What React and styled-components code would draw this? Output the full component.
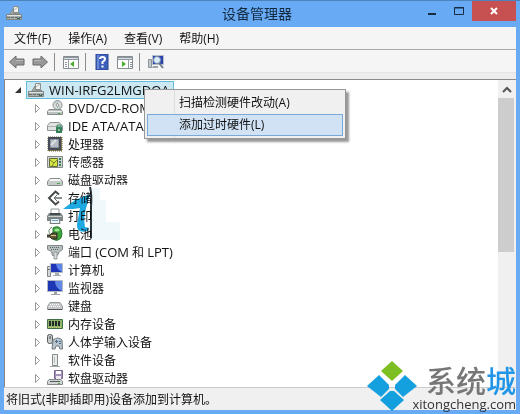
import React from 'react'
import styled, { createGlobalStyle } from 'styled-components'

const GlobalStyle = createGlobalStyle`
  * {
    box-sizing: border-box;
  }
  html, body, #root {
    height: 100%;
    margin: 0;
  }
  body {
    overflow: hidden;
    color: #111;
    font-family: "Open Sans", "Noto Sans CJK SC", sans-serif;
    font-size: 12px;
  }
  button {
    border: none;
    padding: 0;
    background: none;
    color: inherit;
    font: inherit;
  }
`

const ServerIcon = () => (
  <Icon viewBox="0 0 16 16">
    <path d="M7.500 1.500h5v6h-5z" fill="#eef1f0" stroke="#8a918f" />
    <path d="M8 5l4-3" stroke="#b3bab7" />
    <path d="M4 9l3-5v4h6l1 1z" fill="#c5cac8" stroke="#7d8482" />
    <path d="M0.500 9.500h15v5H0.500z" fill="#a9afad" stroke="#7d8482" />
    <path d="M1 10.500h14" stroke="#dfe4e2" />
    <path d="M1 12.500h14" stroke="#666d6b" strokeDasharray="3 1" />
    <path d="M11 13.500h3" stroke="#3b6a58" />
  </Icon>
)

const DiscIcon = () => (
  <Icon viewBox="0 0 16 16">
    <circle cx="10.500" cy="5" r="4.500" fill="#d9dddd" stroke="#8c9292" />
    <path d="M8 2l5 6M10.500 1v7" stroke="#a7bfaf" />
    <circle cx="10.500" cy="5" r="1.300" fill="#fff" stroke="#999" />
    <path d="M2 9.500h12l1.500 2v3H0.500v-3z" fill="#bcc1c1" stroke="#858b8b" />
    <path d="M1 11.500h14" stroke="#eee" />
    <path d="M11 13.500h2" stroke="#44a33e" />
  </Icon>
)

const IdeIcon = () => (
  <Icon viewBox="0 0 16 16">
    <path d="M3 4.500h9l3.500 3v5H0.500v-5z" fill="#e1e3e3" stroke="#8d9393" />
    <path d="M1 8.500h9" stroke="#aaafaf" />
    <path d="M9 9h6v6H9z" fill="#32805a" />
    <path d="M10 7h4v2h-4z" fill="#b8d3c5" stroke="#4b8a6b" />
    <path d="M11 11h2v2h-2z" fill="#8fc3a4" />
  </Icon>
)

const ChipIcon = () => (
  <Icon viewBox="0 0 16 16">
    <path d="M1 1h14v14H1z" fill="#857b50" stroke="#6a6030" strokeDasharray="1 1" />
    <path d="M1 1h13v13H1z" fill="#454c57" />
    <path d="M3.500 3.500h8v8h-8z" fill="#b6bcc4" stroke="#8c939e" />
    <path d="M4 9l5-5" stroke="#dde1e6" strokeWidth="2" />
  </Icon>
)

const SensorIcon = () => (
  <Icon viewBox="0 0 16 16">
    <path d="M0.500 2.500h15v11H0.500z" fill="#d2d7d3" stroke="#828883" />
    <path d="M2.500 4.500h8v8h-8z" fill="#d8e643" stroke="#606b3b" />
    <path d="M3 6l4 3 4-4M7 9l-2 3" stroke="#748434" fill="none" />
    <path d="M13 4v2M13 7v2M13 10v2" stroke="#36765a" strokeWidth="2" />
  </Icon>
)

const DiskIcon = () => (
  <Icon viewBox="0 0 16 16">
    <path d="M3 6.500h10l2.500 3v3q0 1-1 1h-13q-1 0-1-1v-3z" fill="#c7caca" stroke="#868b8b" />
    <path d="M3 7h10l1 2H2z" fill="#f5f6f6" />
    <path d="M10 11.500h3" stroke="#42a840" />
  </Icon>
)

const StorageIcon = () => (
  <Icon viewBox="0 0 16 16">
    <path d="M12 4.500L8.500 1.500 2 8l6.500 6.500L12 11.500" fill="none" stroke="#44494a" strokeWidth="2" />
    <path d="M10 5L7 8l3 3" fill="none" stroke="#6c7171" />
    <path d="M8 8h7" stroke="#8c9191" strokeWidth="2" />
  </Icon>
)

const PrinterIcon = () => (
  <Icon viewBox="0 0 16 16">
    <path d="M4 1h8v6H4z" fill="#fff" stroke="#929999" />
    <path d="M2 5h12l2 3v5H0V8z" fill="#7e8587" />
    <path d="M1 8.500h14" stroke="#c9cece" />
    <path d="M3 6h10" stroke="#444b4c" strokeWidth="2" />
    <path d="M4 10.500h8l1 5H3z" fill="#eff5f8" stroke="#747b7e" />
    <path d="M5 12.500h6" stroke="#66a7c8" />
  </Icon>
)

const BatteryIcon = () => (
  <Icon viewBox="0 0 16 16">
    <path d="M6 2q5-3 8 1 2 5 0 9-4 4-8 1z" fill="#3aa63c" stroke="#287b2b" />
    <path d="M7 4q3-3 6 0-3 3-6 0" fill="#a8e29a" />
    <path d="M5 1Q0 4 3 8" fill="none" stroke="#738372" />
    <path d="M0 9h3l2-2h5v6H5l-2-2H0" fill="#5e5738" stroke="#302f25" />
    <path d="M4 9.500h5" stroke="#d5c684" />
  </Icon>
)

const PortIcon = () => (
  <Icon viewBox="0 0 16 16">
    <path d="M0.500 1.500h15v4l-3 2-2 4h-5l-1-4-4-2z" fill="#b9bebe" stroke="#818888" />
    <path d="M3 3.500h10M4 5.500h8" stroke="#5d6464" strokeDasharray="1 1" />
    <path d="M7 8h3v7H7z" fill="#d9dddd" stroke="#969d9d" />
  </Icon>
)

const ComputerIcon = () => (
  <Icon viewBox="0 0 16 16">
    <path d="M0.500 4.500h3v10h-3z" fill="#d2d6d7" stroke="#818789" />
    <path d="M1 7.500h2" stroke="#677071" />
    <path d="M3.500 1.500h12v9h-12z" fill="#1f36b8" stroke="#b5bac4" />
    <path d="M9 2h6v8q-5-2-6-8" fill="#5d86ea" />
    <path d="M8 11h4v2h2v1H6v-1h2z" fill="#a7aeb0" />
  </Icon>
)

const MonitorIcon = () => (
  <Icon viewBox="0 0 16 16">
    <path d="M0.500 0.500h15v11h-15z" fill="#1f36b4" stroke="#b3bac6" />
    <path d="M8 1h7v10Q8 8 8 1" fill="#6288e5" />
    <path d="M7 12h3v2h3v1H4v-1h3z" fill="#9ba2a5" />
  </Icon>
)

const KeyboardIcon = () => (
  <Icon viewBox="0 0 16 16">
    <path d="M3 4.500h10l2.500 4v3H0.500v-3z" fill="#c5c8c9" stroke="#959b9d" />
    <path d="M3 6.500h10M2 8.500h12" stroke="#fff" strokeDasharray="1 1" />
    <path d="M1 11.500h14" stroke="#545a5c" />
  </Icon>
)

const MemoryIcon = () => (
  <Icon viewBox="0 0 16 16">
    <path d="M0.500 3.500h15v9H0.500z" fill="#8fb46c" stroke="#3f7048" />
    <path d="M3 5v5M6 5v5M9 5v5M12 5v5" stroke="#252b28" strokeWidth="2" />
    <path d="M1 11.500h14" stroke="#d8c974" strokeDasharray="1 1" />
  </Icon>
)

const HidIcon = () => (
  <Icon viewBox="0 0 16 16">
    <rect x="0.500" y="0.500" width="5" height="9" rx="2" fill="#c5caca" stroke="#545b5e" />
    <path d="M3 2v3" stroke="#444b4e" />
    <path d="M6 6q5-4 9 0l0.500 9H13l-1-3H9l-1 3H5z" fill="#bbc4ca" stroke="#707b83" />
    <path d="M8 7.500h3M9.500 6v3M12 7.500h2M12 9.500h2" stroke="#416f94" />
  </Icon>
)

const SoftwareIcon = () => (
  <Icon viewBox="0 0 16 16">
    <path d="M5.500 2.500h5v11h-5z" fill="#e9eaea" stroke="#858b8b" />
    <path d="M7.500 5v6" stroke="#b6bbbb" />
    <path d="M3 14.500h10" stroke="#9da2a2" />
  </Icon>
)

const FloppyIcon = () => (
  <Icon viewBox="0 0 16 16">
    <path d="M7.500 0.500h8v8h-8z" fill="#a592bb" stroke="#78678b" />
    <path d="M9 1h5v3H9z" fill="#fff" />
    <path d="M9 6h5v3H9z" fill="#eeeaf1" />
    <path d="M2 9.500h12l1.500 2v3H0.500v-3z" fill="#d1d5d5" stroke="#838989" />
    <path d="M3 11.500h10" stroke="#555c5c" />
    <path d="M11 13.500h2" stroke="#49a047" />
  </Icon>
)

const ArrowIcon = ({ back }) => (
  <Icon viewBox="0 0 16 16">
    <path
      d={back ? 'M0.500 8L7 2v3h8v6H7v3z' : 'M15.500 8L9 2v3H1v6h8v3z'}
      fill="#999"
      stroke="#686868"
    />
    <path d={back ? 'M7 6.500h7' : 'M2 6.500h7'} stroke="#bbb" />
  </Icon>
)

const PanelIcon = ({ right }) => (
  <Icon viewBox="0 0 16 16">
    <path d="M0.500 2.500h15v12H0.500z" fill="#fff" stroke="#858c91" />
    <path d="M1 3.500h14M1 5.500h14" stroke="#8d979e" />
    <path d="M1 4.500h14" stroke="#d9dfe3" />
    {right ? (
      <>
        <path d="M11.500 6v8" stroke="#959ca0" />
        <path d="M13 8.500h2M13 10.500h2M13 12.500h2" stroke="#8c9499" />
        <path d="M5 7l4 3-4 3z" fill="#4aad28" />
      </>
    ) : (
      <>
        <path d="M5.500 6v8" stroke="#959ca0" />
        <path d="M2 8.500h2M2 10.500h2M2 12.500h2" stroke="#8c9499" />
        <path d="M11 7l-4 3 4 3z" fill="#4aad28" />
      </>
    )}
  </Icon>
)

const HelpIcon = () => (
  <Icon viewBox="0 0 16 16">
    <path d="M2 0h12v16H2z" fill="#3d60bd" stroke="#2b458f" />
    <path d="M3 1h2v14H3z" fill="#6888d3" />
    <path d="M6 5q0-2 2.500-2T11 5q0 1.500-2.500 3v2M8.500 11.500v2" fill="none" stroke="#fff" strokeWidth="2" />
  </Icon>
)

const ScanIcon = () => (
  <Icon viewBox="0 0 16 16">
    <path d="M0.500 5.500h3v8h-3z" fill="#c3c9cc" stroke="#8c9397" />
    <path d="M4.500 1.500h11v9h-11z" fill="#2b46b0" stroke="#b6bfca" />
    <circle cx="9" cy="6" r="3.500" fill="#d9edfa" stroke="#7f8ca7" />
    <path d="M11 9l4 5" stroke="#737d84" strokeWidth="2" />
    <path d="M5 12h5v2H4z" fill="#9da4a7" />
  </Icon>
)

const Icon = styled.svg`
  width: 16px;
  height: 16px;
  flex: none;
`

// latin letters run a little larger than the chinese ones
const Latin = styled.span`
  font-size: 13px;
`

const devices = [
  { name: <Latin>DVD/CD-ROM</Latin>, icon: DiscIcon },
  { name: <Latin>IDE ATA/ATAPI</Latin>, icon: IdeIcon },
  { name: '处理器', icon: ChipIcon },
  { name: '传感器', icon: SensorIcon },
  { name: '磁盘驱动器', icon: DiskIcon },
  { name: '存储', icon: StorageIcon },
  { name: '打印', icon: PrinterIcon },
  { name: '电池', icon: BatteryIcon },
  { name: <>端口 <Latin>(COM</Latin> 和 <Latin>LPT)</Latin></>, icon: PortIcon },
  { name: '计算机', icon: ComputerIcon },
  { name: '监视器', icon: MonitorIcon },
  { name: '键盘', icon: KeyboardIcon },
  { name: '内存设备', icon: MemoryIcon },
  { name: '人体学输入设备', icon: HidIcon },
  { name: '软件设备', icon: SoftwareIcon },
  { name: '软盘驱动器', icon: FloppyIcon },
]

export default function App() {
  return (
    <>
      <GlobalStyle />
      <Window>
        <TitleBar>
          <ServerIcon />
          <h1>设备管理器</h1>
          <WindowButton aria-label="最小化">
            <svg width="12" height="12"><path d="M2 9h8" stroke="#152c43" strokeWidth="2" /></svg>
          </WindowButton>
          <WindowButton aria-label="最大化">
            <svg width="12" height="12"><path d="M1.500 2.500h9v7h-9zM1 3h10" stroke="#152c43" fill="none" /></svg>
          </WindowButton>
          <WindowButton $close aria-label="关闭">
            <svg width="12" height="12"><path d="M3 3l6 6M9 3L3 9" stroke="#fff" strokeWidth="2" /></svg>
          </WindowButton>
        </TitleBar>
        <MenuBar>
          <button>文件(F)</button>
          <button>操作(A)</button>
          <button>查看(V)</button>
          <button>帮助(H)</button>
        </MenuBar>
        <Toolbar>
          <ToolButton aria-label="后退"><ArrowIcon back /></ToolButton>
          <ToolButton aria-label="前进"><ArrowIcon /></ToolButton>
          <Divider />
          <ToolButton aria-label="控制台树"><PanelIcon /></ToolButton>
          <Divider />
          <ToolButton aria-label="帮助"><HelpIcon /></ToolButton>
          <ToolButton aria-label="操作窗格"><PanelIcon right /></ToolButton>
          <Divider />
          <ToolButton aria-label="扫描"><ScanIcon /></ToolButton>
        </Toolbar>
        <Content>
          <Tree>
            <Root>
              <svg width="8" height="8"><path d="M7 1v6H1z" fill="#333" /></svg>
              <Selected>
                <ServerIcon />
                <Latin>WIN-IRFG2LMGDOA</Latin>
              </Selected>
            </Root>
            {devices.map(({ name, icon: DeviceIcon }, index) => (
              <Row key={index}>
                <svg width="8" height="10"><path d="M1.500 1.500v8l4-4z" fill="#fff" stroke="#999" /></svg>
                <DeviceIcon />
                <span>{name}</span>
              </Row>
            ))}
          </Tree>
          <ScrollBar>
            <button aria-label="向上滚动">
              <svg width="10" height="8"><path d="M1 6l4-4 4 4" fill="none" stroke="#555" strokeWidth="2" /></svg>
            </button>
            <Thumb />
          </ScrollBar>
        </Content>
        <StatusBar>将旧式(非即插即用)设备添加到计算机。</StatusBar>
        <Smudge viewBox="0 0 68 64" aria-hidden="true">
          <path d="M30 1h38v56H30z" fill="#fff" />
          <path d="M30 4h8v12h6v22h14v18H30z" fill="#eff9fc" />
        </Smudge>
        <Smudge $ink viewBox="0 0 68 64" aria-hidden="true">
          <path d="M1 25l12-9 15-6-3 11q-4 12-2 22l4 1-1 3q-12 3-11-7l3-16-7 1z" fill="#1ea9e1" />
          <path d="M28 3q2 8 1 20v31" fill="none" stroke="#26343b" strokeWidth="2" />
        </Smudge>
        <ContextMenu>
          <MenuItem>扫描检测硬件改动(A)</MenuItem>
          <MenuItem $active>添加过时硬件(L)</MenuItem>
        </ContextMenu>
        <Watermark>
          <svg viewBox="0 0 52 52">
            <path d="M26 1l11 10-11 10-11-10z" fill="#7dbe22" />
            <path d="M13 15l10 10v4l-8 8L1 26z" fill="#149fdf" />
            <path d="M39 15l12 11-14 11-8-8v-4z" fill="#149fdf" />
            <path d="M24 31h4l10 9-12 11-12-11z" fill="#149fdf" />
          </svg>
          <div>
            <strong>系统<em>城</em></strong>
            <span>xitongcheng.com</span>
          </div>
        </Watermark>
      </Window>
    </>
  )
}

const Window = styled.main`
  position: relative;
  display: flex;
  flex-direction: column;
  height: 100vh;
  padding: 0 4px 4px;
  border-top: 1px solid #4d83bd;
  background: #69aaf5;
`

const TitleBar = styled.header`
  display: flex;
  align-items: flex-start;
  height: 26px;
  flex: none;
  ${Icon} {
    margin: 4px 0 0 2px;
  }
  h1 {
    flex: 1;
    margin: 0 0 0 74px;
    color: #12293f;
    font-size: 14px;
    font-weight: 400;
    line-height: 25px;
    text-align: center;
  }
`

const WindowButton = styled.button`
  display: grid;
  place-items: center;
  width: ${({ $close }) => ($close ? '44px' : '27px')};
  height: 20px;
  background: ${({ $close }) => ($close ? '#c75050' : 'none')};
`

const MenuBar = styled.nav`
  display: flex;
  gap: 17px;
  height: 23px;
  flex: none;
  padding: 0 10px;
  border-bottom: 1px solid #aaa;
  background: #f5f5f5;
`

const Toolbar = styled.div`
  display: flex;
  align-items: center;
  gap: 5px;
  height: 30px;
  flex: none;
  padding: 0 4px 6px;
  border-bottom: 1px solid #8b8b8b;
  background: linear-gradient(#f5f5f5 22px, #ddd 22px, #ededed 23px);
`

const ToolButton = styled.button`
  display: grid;
  place-items: center;
  width: 18px;
  height: 20px;
`

const Divider = styled.span`
  width: 1px;
  height: 18px;
  margin-right: 2px;
  background: #8c8c8c;
`

const Content = styled.section`
  display: flex;
  flex: 1;
  min-height: 0;
  border-left: 1px solid #858585;
  background: #fff;
`

const Tree = styled.div`
  flex: 1;
  min-width: 0;
  padding-top: 1px;
  overflow: hidden;
`

const Row = styled.div`
  display: flex;
  align-items: center;
  height: 18px;
  padding-left: 29px;
  white-space: nowrap;
  ${Icon} {
    margin: 0 5px 0 5px;
  }
`

const Root = styled(Row)`
  gap: 4px;
  padding-left: 9px;
`

const Selected = styled.div`
  display: flex;
  align-items: center;
  height: 18px;
  padding-right: 3px;
  border: 1px solid #65bcd9;
  background: #cce8f3;
  ${Icon} {
    margin: 0 5px 0 1px;
  }
`

const ScrollBar = styled.div`
  display: flex;
  flex-direction: column;
  width: 18px;
  background: #f0f0f0;
  button {
    height: 18px;
  }
`

const Thumb = styled.div`
  height: 154px;
  margin: 0 2px 0 0;
  background: #cdcdcd;
`

const StatusBar = styled.footer`
  height: 23px;
  flex: none;
  padding-left: 2px;
  border-top: 1px solid #ccc;
  background: #f0f0f0;
  line-height: 24px;
`

const ContextMenu = styled.div`
  position: absolute;
  top: 88px;
  left: 144px;
  width: 202px;
  padding: 2px;
  border: 1px solid #979797;
  background: linear-gradient(90deg, #f0f0f0 29px, #ddd 29px, #ddd 30px, #f0f0f0 30px);
  box-shadow: 3px 3px 2px #999;
`

const MenuItem = styled.button`
  display: block;
  width: 100%;
  height: 22px;
  padding-left: 31px;
  border: 1px solid ${({ $active }) => ($active ? '#78a9d9' : 'transparent')};
  background: ${({ $active }) => ($active ? '#d0e2f4' : 'none')};
  line-height: 20px;
  text-align: left;
`

const Smudge = styled.svg`
  position: absolute;
  top: 183px;
  left: 62px;
  width: 68px;
  height: 64px;
  mix-blend-mode: ${({ $ink }) => ($ink ? 'multiply' : 'normal')};
  pointer-events: none;
`

const Watermark = styled.div`
  position: absolute;
  right: 4px;
  bottom: 2px;
  display: flex;
  align-items: flex-end;
  svg {
    width: 52px;
    height: 52px;
    margin-right: -6px;
  }
  div {
    display: flex;
    flex-direction: column;
    align-items: flex-end;
  }
  strong {
    color: #777;
    font-size: 30px;
    font-weight: 500;
    line-height: 30px;
  }
  em {
    color: #2196e8;
    font-style: normal;
  }
  span {
    color: #333;
    font-size: 13px;
    line-height: 16px;
  }
`
